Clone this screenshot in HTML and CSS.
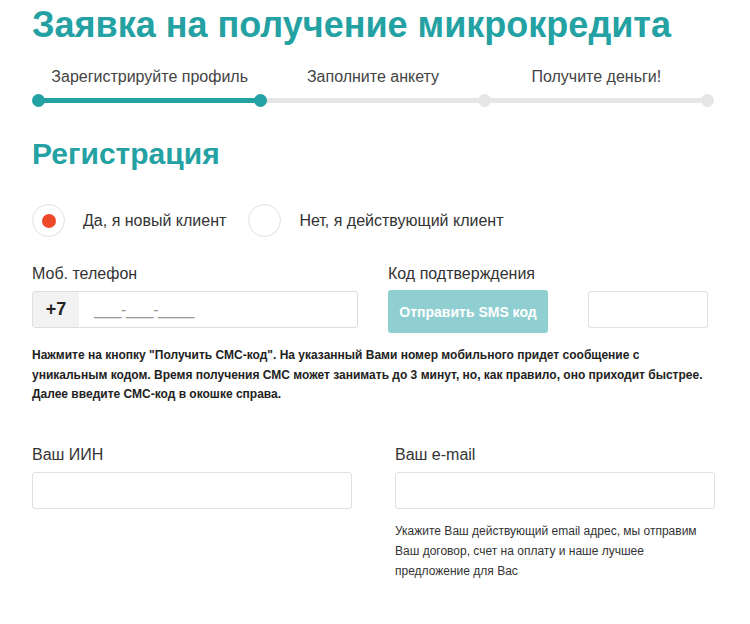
FILE: index.html
```html
<!DOCTYPE html>
<html lang="ru">
<head>
  <meta charset="UTF-8">
  <meta name="viewport" content="width=device-width, initial-scale=1.0">
  <title>Заявка на получение микрокредита</title>
  <link rel="stylesheet" href="styles.css">
</head>
<body>
  <div class="page">
    <h1 class="title">Заявка на получение микрокредита</h1>

    <div class="steps">
      <div class="step done">
        <span class="step-label">Зарегистрируйте профиль</span>
        <div class="step-bar"></div>
      </div>
      <div class="step">
        <span class="step-label">Заполните анкету</span>
        <div class="step-bar"></div>
      </div>
      <div class="step last">
        <span class="step-label">Получите деньги!</span>
        <div class="step-bar"></div>
      </div>
    </div>

    <h2 class="section-title">Регистрация</h2>

    <div class="radios">
      <label class="radio checked"><span class="radio-circle"></span>Да, я новый клиент</label>
      <label class="radio"><span class="radio-circle"></span>Нет, я действующий клиент</label>
    </div>

    <div class="phone-row">
      <div class="field phone-field">
        <div class="field-label">Моб. телефон</div>
        <div class="phone-input">
          <span class="prefix">+7</span>
          <span class="mask">___-___-____</span>
        </div>
      </div>
      <div class="field code-field">
        <div class="field-label">Код подтверждения</div>
        <div class="code-row">
          <button class="sms-btn">Отправить SMS код</button>
          <input class="input code-input" type="text">
        </div>
      </div>
    </div>

    <p class="note">Нажмите на кнопку "Получить СМС-код". На указанный Вами номер мобильного придет сообщение с уникальным кодом. Время получения СМС может занимать до 3 минут, но, как правило, оно приходит быстрее. Далее введите СМС-код в окошке справа.</p>

    <div class="two-cols">
      <div class="field">
        <div class="field-label">Ваш ИИН</div>
        <input class="input" type="text">
      </div>
      <div class="field">
        <div class="field-label">Ваш e-mail</div>
        <input class="input" type="email">
        <p class="hint">Укажите Ваш действующий email адрес, мы отправим Ваш договор, счет на оплату и наше лучшее предложение для Вас</p>
      </div>
    </div>
  </div>
</body>
</html>
```

FILE: styles.css
```css
body {
  margin: 0;
  background-color: #fff;
  font-family: "Liberation Sans", Arial, sans-serif;
  color: #333;
}
.page {
  padding: 0 32px;
  width: 686px;
}
.title {
  margin: 0;
  padding-top: 3px;
  font-size: 36px;
  line-height: 44px;
  color: #23a1a3;
}
.steps {
  display: flex;
  margin: 20px 0 0 6px;
  width: 670px;
}
.step {
  flex: 1;
  text-align: center;
}
.step-label {
  display: block;
  font-size: 16px;
  line-height: 20px;
  color: #444;
}
.step-bar {
  position: relative;
  height: 5px;
  margin-top: 11px;
  background-color: #e6e6e6;
}
.step-bar::before,
.step-bar::after {
  content: "";
  position: absolute;
  z-index: 1;
  top: -4px;
  width: 13px;
  height: 13px;
  border-radius: 50%;
  background-color: #e6e6e6;
}
.step-bar::before {
  left: -6px;
}
.step-bar::after {
  right: -6px;
}
.step.done .step-bar,
.step.done .step-bar::before,
.step.done .step-bar::after {
  background-color: #23a1a3;
}
.step.done .step-bar::after {
  z-index: 2;
}
.step + .step .step-bar::before {
  display: none;
}
.section-title {
  margin: 33px 0 0;
  font-size: 30px;
  line-height: 36px;
  color: #23a1a3;
}
.radios {
  display: flex;
  margin-top: 32px;
}
.radio {
  display: flex;
  align-items: center;
  font-size: 16px;
  color: #333;
  margin-right: 22px;
}
.radio-circle {
  position: relative;
  width: 33px;
  height: 33px;
  border: 1px solid #e0e0e0;
  border-radius: 50%;
  margin-right: 18px;
  box-sizing: border-box;
}
.radio.checked .radio-circle::after {
  content: "";
  position: absolute;
  left: 8.5px;
  top: 8.5px;
  width: 14px;
  height: 14px;
  border-radius: 50%;
  background-color: #ee4a2a;
}
.phone-row {
  display: flex;
  margin-top: 27px;
}
.field-label {
  font-size: 16px;
  line-height: 20px;
  color: #333;
  margin-bottom: 7px;
}
.phone-field {
  width: 326px;
}
.code-field {
  margin-left: 30px;
}
.phone-input {
  display: flex;
  height: 37px;
  border: 1px solid #ddd;
  border-radius: 3px;
  box-sizing: border-box;
  overflow: hidden;
}
.prefix {
  width: 46px;
  background-color: #f2f2f2;
  font-weight: bold;
  font-size: 18px;
  line-height: 35px;
  color: #222;
  text-align: center;
}
.mask {
  padding-left: 15px;
  font-size: 17px;
  line-height: 35px;
  color: #999;
  letter-spacing: -0.5px;
}
.code-row {
  display: flex;
  align-items: flex-start;
}
.sms-btn {
  width: 160px;
  height: 43px;
  border: none;
  border-radius: 3px;
  background-color: #8fcfd1;
  color: #fff;
  font-family: "Liberation Sans", Arial, sans-serif;
  font-weight: bold;
  font-size: 14px;
  margin-top: -1px;
}
.input {
  display: block;
  width: 100%;
  height: 37px;
  border: 1px solid #e0e0e0;
  border-radius: 3px;
  box-sizing: border-box;
  font-size: 16px;
}
.code-input {
  width: 120px;
  margin-left: 40px;
}
.note {
  margin: 13px 0 0;
  font-size: 12px;
  font-weight: bold;
  line-height: 19.5px;
  color: #222;
  width: 676px;
}
.two-cols {
  display: grid;
  grid-template-columns: 320px 320px;
  column-gap: 43px;
  margin-top: 40px;
}
.hint {
  margin: 12px 0 0;
  font-size: 12px;
  line-height: 20px;
  color: #333;
  width: 320px;
}
```
